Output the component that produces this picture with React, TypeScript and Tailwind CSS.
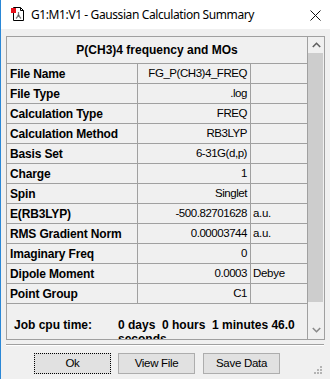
const rows: [string, string, string][] = [
  ["File Name", "FG_P(CH3)4_FREQ", ""],
  ["File Type", ".log", ""],
  ["Calculation Type", "FREQ", ""],
  ["Calculation Method", "RB3LYP", ""],
  ["Basis Set", "6-31G(d,p)", ""],
  ["Charge", "1", ""],
  ["Spin", "Singlet", ""],
  ["E(RB3LYP)", "-500.82701628", "a.u."],
  ["RMS Gradient Norm", "0.00003744", "a.u."],
  ["Imaginary Freq", "0", ""],
  ["Dipole Moment", "0.0003", "Debye"],
  ["Point Group", "C1", ""],
];

const AppIcon = () => (
  <svg width="16" height="16" viewBox="0 0 16 16" className="shrink-0">
    <path d="M3.5 1.5 H10.5 L13.5 4.5 V14.5 H3.5 Z" fill="#fff" stroke="#000" strokeWidth="1" />
    <path d="M10.5 1.5 V4.5 H13.5" fill="none" stroke="#000" strokeWidth="1" />
    <rect x="1" y="2" width="5" height="5" fill="#e8101a" />
    <path d="M8.5 6 V9.5 L6 12.5 M8.5 9.5 L11 12.5" fill="none" stroke="#7a7a7a" strokeWidth="1.2" />
    <circle cx="8.5" cy="9.5" r="1" fill="#555" />
  </svg>
);

const Grip = () => (
  <svg width="10" height="10" viewBox="0 0 10 10">
    <rect x="7" y="1" width="2" height="2" fill="#b4b4b4" />
    <rect x="4" y="4" width="2" height="2" fill="#b4b4b4" />
    <rect x="7" y="4" width="2" height="2" fill="#b4b4b4" />
    <rect x="1" y="7" width="2" height="2" fill="#b4b4b4" />
    <rect x="4" y="7" width="2" height="2" fill="#b4b4b4" />
    <rect x="7" y="7" width="2" height="2" fill="#b4b4b4" />
  </svg>
);

export default function App() {
  return (
    <div
      className="w-[330px] h-[379px] bg-[#f0f0f0] border-l border-[#2a87d6] overflow-hidden flex flex-col text-black"
      style={{ fontFamily: '"Liberation Sans", Arial, sans-serif' }}
    >
      {/* title bar */}
      <div className="h-[29px] bg-white flex items-center shrink-0">
        <div className="ml-[9px] mt-[-1px]">
          <AppIcon />
        </div>
        <span
          className="ml-[5px] text-[12px] tracking-[-0.4px] text-black"
          style={{ fontFamily: '"Noto Sans", "Open Sans", sans-serif' }}
        >
          G1:M1:V1 - Gaussian Calculation Summary
        </span>
        <svg width="11" height="11" viewBox="0 0 11 11" className="ml-auto mr-[9px] mt-[1px]">
          <path d="M0.5 0.5 L10.5 10.5 M10.5 0.5 L0.5 10.5" stroke="#111" strokeWidth="1" />
        </svg>
      </div>

      {/* framed table */}
      <div className="mt-[7px] ml-[5px] w-[319px] h-[304px] border border-[#a0a0a0] flex shrink-0">
        <div className="w-[301px] border-r border-[#a0a0a0] overflow-hidden">
          <div className="h-[27px] border-b border-[#a0a0a0] flex items-center justify-center text-[12px] font-bold">
            P(CH3)4 frequency and MOs
          </div>
          {rows.map(([label, value, unit]) => (
            <div key={label} className="h-5 border-b border-[#a0a0a0] flex">
              <div className="w-[131px] border-r border-[#a0a0a0] pl-[3px] flex items-center text-[12px] font-bold tracking-[-0.15px] whitespace-nowrap">
                {label}
              </div>
              <div className="w-[113px] border-r border-[#a0a0a0] pr-[3px] flex items-center justify-end text-[11.5px] tracking-[-0.45px] whitespace-nowrap">
                {value}
              </div>
              <div className="flex-1 pl-[2px] flex items-center text-[11.5px] tracking-[-0.3px]">{unit}</div>
            </div>
          ))}
          <div className="flex pt-[14px] pl-[7px] text-[12px] font-bold leading-[14px]">
            <div className="w-[104px] shrink-0">Job cpu time:</div>
            <div className="w-[185px] whitespace-pre-wrap">0 days  0 hours  1 minutes 46.0 seconds</div>
          </div>
        </div>
        {/* scrollbar */}
        <div className="flex-1 flex flex-col">
          <div className="h-[16px] flex items-center justify-center">
            <svg width="9" height="6" viewBox="0 0 9 6">
              <path d="M0.8 5 L4.5 1.3 L8.2 5" fill="none" stroke="#606060" strokeWidth="1.6" />
            </svg>
          </div>
          <div className="h-[249px] w-[15px] bg-[#cdcdcd]" />
          <div className="flex-1 flex items-end justify-center pb-[6px]">
            <svg width="9" height="6" viewBox="0 0 9 6">
              <path d="M0.8 1 L4.5 4.7 L8.2 1" fill="none" stroke="#8a8a8a" strokeWidth="1.6" />
            </svg>
          </div>
        </div>
      </div>

      {/* separator */}
      <div className="mt-[4px] ml-[5px] w-[318px] h-px bg-[#a0a0a0] shrink-0" />
      <div className="ml-[5px] w-[318px] h-px bg-white shrink-0" />

      {/* buttons */}
      <div className="flex mt-[7px] ml-[33px] text-[11.5px] tracking-[-0.3px]">
        <button className="w-[77px] h-[21px] bg-[#e1e1e1] border border-dotted border-black flex items-center justify-center">
          Ok
        </button>
        <button className="ml-[7px] w-[77px] h-[21px] bg-[#e1e1e1] border border-[#adadad] flex items-center justify-center">
          View File
        </button>
        <button className="ml-[8px] w-[77px] h-[21px] bg-[#e1e1e1] border border-[#adadad] flex items-center justify-center">
          Save Data
        </button>
      </div>
      <div className="flex justify-end mr-[7px] mt-[-9px]">
        <Grip />
      </div>
    </div>
  );
}
